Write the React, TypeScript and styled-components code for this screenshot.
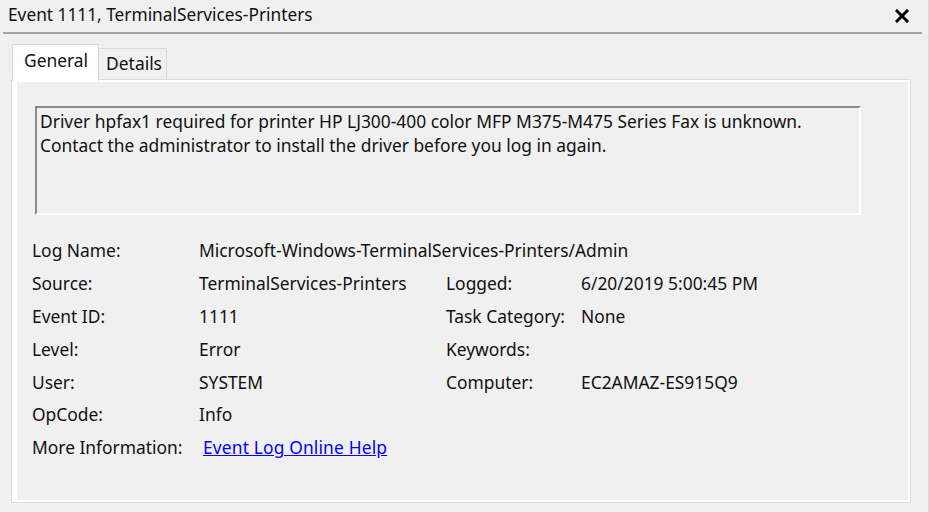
import React from 'react'
import styled, { createGlobalStyle } from 'styled-components'

const Global = createGlobalStyle`
  html, body {
    margin: 0;
    padding: 0;
    background: #f0f0f0;
  }
`

const Window = styled.div`
  width: 928px;
  height: 512px;
  background: #f0f0f0;
  border-right: 1px solid #dadada;
  font-family: 'Noto Sans', 'Open Sans', sans-serif;
  font-size: 17.4px;
  color: #111;
  display: flex;
  flex-direction: column;
  overflow: hidden;
`

const TitleBar = styled.div`
  height: 32px;
  display: flex;
  align-items: center;
  justify-content: space-between;
  padding: 0 19px 0 8px;
`

const Title = styled.span`
  font-size: 17.3px;
  line-height: 1;
  margin-top: -2px;
`

const Divider = styled.div`
  height: 2px;
  background: #a3a3a3;
  margin: 0 6px 0 3px;
`

const Tabs = styled.div`
  display: flex;
  align-items: flex-end;
  margin: 10px 0 0 12px;
  height: 35px;
`

const Tab = styled.div<{ $active?: boolean }>`
  box-sizing: border-box;
  height: ${p => (p.$active ? '37px' : '31px')};
  margin-bottom: ${p => (p.$active ? '-2px' : '0')};
  padding: ${p => (p.$active ? '3px 10px 0 11px' : '2px 4px 0 7px')};
  background: ${p => (p.$active ? '#ffffff' : '#f0f0f0')};
  border: 1px solid #d9d9d9;
  border-bottom: none;
  border-left-width: ${p => (p.$active ? '1px' : '0')};
  position: relative;
  z-index: ${p => (p.$active ? 1 : 0)};
  line-height: 24px;
`

const Panel = styled.div`
  width: 900px;
  box-sizing: border-box;
  margin-left: 11px;
  border: 1px solid #d9d9d9;
  background: #ffffff;
  padding: 2px 2px 2px 5px;
  height: 424px;
`

const PanelInner = styled.div`
  background: #f0f0f0;
  height: 100%;
  padding: 24px 0 0 15px;
  box-sizing: border-box;
`

const MessageBox = styled.div`
  box-sizing: border-box;
  width: 826px;
  height: 109px;
  margin-left: 3px;
  border-top: 2px solid #8a8a8a;
  border-left: 2px solid #8a8a8a;
  border-right: 2px solid #ffffff;
  border-bottom: 2px solid #ffffff;
  padding: 1px 0 0 3px;
  line-height: 24px;
`

const Fields = styled.div`
  display: grid;
  grid-template-columns: 167px 247px 135px 1fr;
  grid-auto-rows: 32.8px;
  align-items: center;
  margin-top: 19px;
`

const Label = styled.div`
  white-space: nowrap;
`

const Value = styled.div<{ $span?: number }>`
  grid-column: span ${p => p.$span ?? 1};
  white-space: nowrap;
`

const HelpLink = styled.a`
  color: #0000ff;
  text-decoration: underline;
  margin-left: 4px;
  cursor: pointer;
  letter-spacing: 0.15px;
`

const CloseIcon = () => (
  <svg width="14" height="14" viewBox="0 0 14 14">
    <path d="M2 2 L12 12 M12 2 L2 12" stroke="#000" strokeWidth="3" strokeLinecap="square" />
  </svg>
)

const rows: [string, string, string?, string?][] = [
  ['Source:', 'TerminalServices-Printers', 'Logged:', '6/20/2019 5:00:45 PM'],
  ['Event ID:', '1111', 'Task Category:', 'None'],
  ['Level:', 'Error', 'Keywords:', ''],
  ['User:', 'SYSTEM', 'Computer:', 'EC2AMAZ-ES915Q9'],
  ['OpCode:', 'Info'],
]

export default function App() {
  return (
    <Window>
      <Global />
      <TitleBar>
        <Title>Event 1111, TerminalServices-Printers</Title>
        <CloseIcon />
      </TitleBar>
      <Divider />
      <Tabs>
        <Tab $active>General</Tab>
        <Tab>Details</Tab>
      </Tabs>
      <Panel>
        <PanelInner>
          <MessageBox>
            Driver hpfax1 required for printer HP LJ300-400 color MFP M375-M475 Series Fax is unknown.
            <br />
            Contact the administrator to install the driver before you log in again.
          </MessageBox>
          <Fields>
            <Label>Log Name:</Label>
            <Value $span={3}>Microsoft-Windows-TerminalServices-Printers/Admin</Value>
            {rows.map(([l1, v1, l2, v2]) => (
              <React.Fragment key={l1}>
                <Label>{l1}</Label>
                <Value>{v1}</Value>
                <Label>{l2 ?? ''}</Label>
                <Value>{v2 ?? ''}</Value>
              </React.Fragment>
            ))}
            <Label>More Information:</Label>
            <Value $span={3}>
              <HelpLink>Event Log Online Help</HelpLink>
            </Value>
          </Fields>
        </PanelInner>
      </Panel>
    </Window>
  )
}
